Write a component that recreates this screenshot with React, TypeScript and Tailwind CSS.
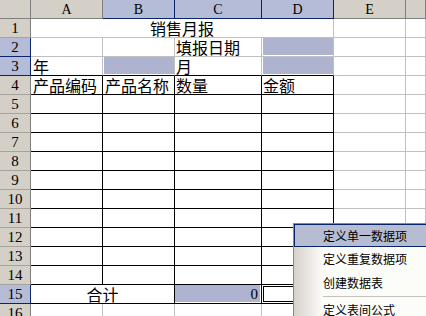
const cjk = "font-['Noto_Sans_CJK_SC',sans-serif]";
const serif = "font-['Liberation_Serif',serif]";

const G = 'border-r border-b border-[#c0c0c0]';
const K = 'border-r border-b border-black';
const GK = 'border-r border-b border-r-[#c0c0c0] border-b-black';

const cols = ['A', 'B', 'C', 'D', 'E'];
const selCols = ['B', 'C', 'D'];
const colW: Record<string, string> = {
  A: 'w-[72px]',
  B: 'w-[72px]',
  C: 'w-[87px]',
  D: 'w-[72px]',
  E: 'w-[72px]',
};

function RowHead({ n, sel }: { n: number; sel?: boolean }) {
  return (
    <div
      className={`w-[31px] shrink-0 flex items-center justify-center border-r border-b text-[15px] ${serif} ${
        sel ? 'bg-[#b5bcd7] border-[#0a246a]' : 'bg-[#d4d0c8] border-r-[#808080] border-b-[#a6a39c]'
      }`}
    >
      {n}
    </div>
  );
}

function Fill({ children }: { children?: React.ReactNode }) {
  return <div className="ml-px mb-px h-[17px] bg-[#aeb3cf]">{children}</div>;
}

function Tail() {
  return (
    <>
      <div className={`w-[72px] shrink-0 ${G}`} />
      <div className={`flex-1 ${G}`} />
    </>
  );
}

export default function App() {
  const bodyRows = [5, 6, 7, 8, 9, 10, 11, 12, 13, 14];

  return (
    <div className={`relative w-[426px] h-[316px] overflow-hidden bg-white text-black ${cjk}`}>
      {/* column headers */}
      <div className="flex h-[19px]">
        <div className="w-[31px] shrink-0 bg-[#d4d0c8] border-r border-b border-[#808080]" />
        {cols.map((c) => {
          const sel = selCols.includes(c);
          return (
            <div
              key={c}
              className={`${colW[c]} shrink-0 flex items-center justify-center border-r border-b text-[14px] ${serif} ${
                sel ? 'bg-[#b5bcd7] border-[#0a246a]' : 'bg-[#d4d0c8] border-[#808080]'
              }`}
            >
              {c}
            </div>
          );
        })}
        <div className="flex-1 bg-[#d4d0c8] border-r border-b border-[#808080]" />
      </div>

      <div className="text-[16px] leading-[18px]">
        {/* row 1 */}
        <div className="flex h-[19px]">
          <RowHead n={1} />
          <div className={`w-[303px] shrink-0 text-center ${G}`}>销售月报</div>
          <Tail />
        </div>

        {/* row 2 */}
        <div className="flex h-[19px]">
          <RowHead n={2} sel />
          <div className={`w-[72px] shrink-0 ${G}`} />
          <div className={`w-[72px] shrink-0 ${G}`} />
          <div className={`w-[87px] shrink-0 pl-px ${G}`}>填报日期</div>
          <div className={`w-[72px] shrink-0 ${G}`}>
            <Fill />
          </div>
          <Tail />
        </div>

        {/* row 3 */}
        <div className="flex h-[19px]">
          <RowHead n={3} sel />
          <div className={`w-[72px] shrink-0 pl-[2px] ${GK}`}>年</div>
          <div className={`w-[72px] shrink-0 ${GK}`}>
            <Fill />
          </div>
          <div className={`w-[87px] shrink-0 pl-px ${GK}`}>月</div>
          <div className={`w-[72px] shrink-0 ${GK}`}>
            <Fill />
          </div>
          <Tail />
        </div>

        {/* row 4 */}
        <div className="flex h-[19px]">
          <RowHead n={4} />
          <div className={`w-[72px] shrink-0 pl-[2px] ${K}`}>产品编码</div>
          <div className={`w-[72px] shrink-0 pl-[2px] ${K}`}>产品名称</div>
          <div className={`w-[87px] shrink-0 pl-px ${K}`}>数量</div>
          <div className={`w-[72px] shrink-0 pl-px ${K}`}>金额</div>
          <Tail />
        </div>

        {bodyRows.map((n) => (
          <div key={n} className="flex h-[19px]">
            <RowHead n={n} />
            <div className={`w-[72px] shrink-0 ${K}`} />
            <div className={`w-[72px] shrink-0 ${K}`} />
            <div className={`w-[87px] shrink-0 ${K}`} />
            <div className={`w-[72px] shrink-0 ${K}`} />
            <Tail />
          </div>
        ))}

        {/* row 15 */}
        <div className="flex h-[19px]">
          <RowHead n={15} sel />
          <div className={`w-[144px] shrink-0 text-center ${K}`}>合计</div>
          <div className={`w-[87px] shrink-0 ${K}`}>
            <div className={`mr-px mb-px h-[17px] bg-[#aeb3cf] text-right pr-[2px] text-[15px] ${serif}`}>0</div>
          </div>
          <div className={`w-[72px] shrink-0 ${K}`}>
            <div className="ml-px mt-px h-[16px] border border-black" />
          </div>
          <Tail />
        </div>

        {/* row 16 */}
        <div className="flex h-[19px]">
          <RowHead n={16} />
          <div className={`w-[72px] shrink-0 ${G}`} />
          <div className={`w-[72px] shrink-0 ${G}`} />
          <div className={`w-[87px] shrink-0 ${G}`} />
          <div className={`w-[72px] shrink-0 ${G}`} />
          <Tail />
        </div>
      </div>

      {/* context menu */}
      <div className="absolute left-[293px] top-[223px] w-[200px] border border-[#8c8a84] bg-[#fcfcf9] text-[12px] leading-[14px]">
        <div className="h-[23px] flex items-center pl-[28px] border border-[#0a246a] bg-[#b6bdd2]">定义单一数据项</div>
        <div className="flex h-[24px]">
          <div className="w-[29px] shrink-0 bg-gradient-to-r from-[#d5d2ca] to-[#fcfcf9]" />
          <div className="flex items-center">定义重复数据项</div>
        </div>
        <div className="flex h-[24px]">
          <div className="w-[29px] shrink-0 bg-gradient-to-r from-[#d5d2ca] to-[#fcfcf9]" />
          <div className="flex items-center">创建数据表</div>
        </div>
        <div className="flex h-[3px]">
          <div className="w-[29px] shrink-0 bg-gradient-to-r from-[#d5d2ca] to-[#fcfcf9]" />
          <div className="flex-1 mt-px h-px bg-[#c5c2b8]" />
        </div>
        <div className="flex h-[23px]">
          <div className="w-[29px] shrink-0 bg-gradient-to-r from-[#d5d2ca] to-[#fcfcf9]" />
          <div className="flex items-center">定义表间公式</div>
        </div>
      </div>
    </div>
  );
}
